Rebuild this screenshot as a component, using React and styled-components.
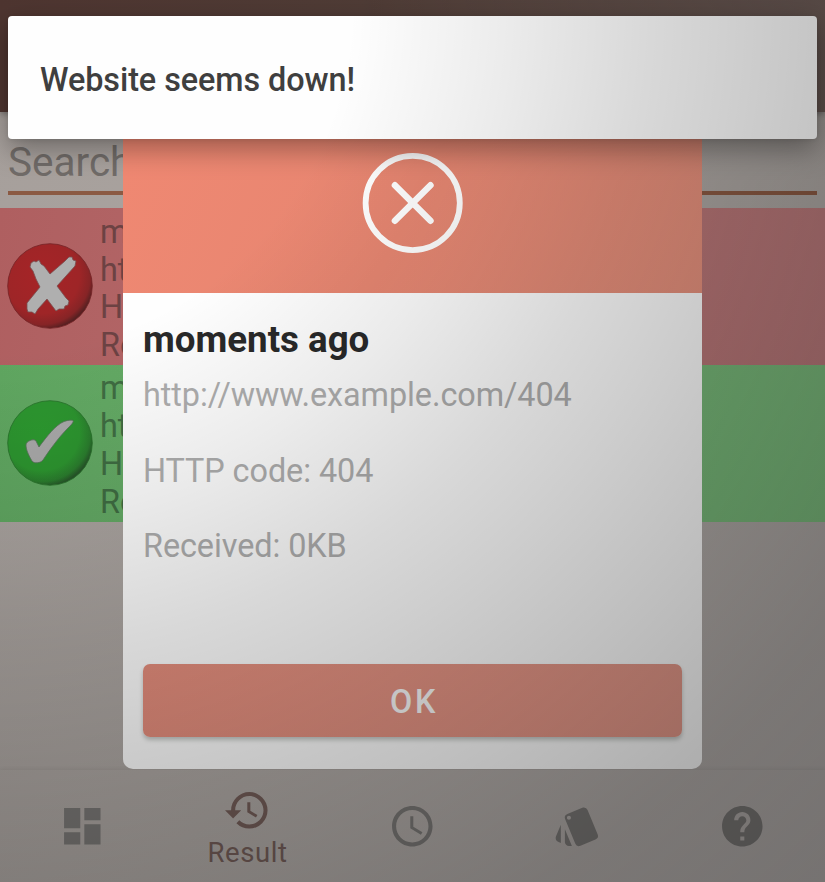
import React from "react";
import styled, { createGlobalStyle } from "styled-components";
import { MdDashboard, MdHistory, MdAccessTime, MdStyle, MdHelp } from "react-icons/md";

const Global = createGlobalStyle`
  *, *::before, *::after { box-sizing: border-box; }
  body { margin: 0; overflow: hidden; font-family: Roboto, "Noto Sans", sans-serif; }
`;

const Screen = styled.div`
  position: relative;
  display: flex;
  flex-direction: column;
  width: 825px;
  height: 882px;
  overflow: hidden;
  background: linear-gradient(135deg, #a59e9a, #aea8a4 60%, #b5b0ae);
`;

const AppBar = styled.header`
  flex: none;
  height: 111.5px;
  background: linear-gradient(90deg, #4e3530, #4f3c36 45%, #6e5d58);
  box-shadow: 0 2px 6px rgba(0, 0, 0, 0.3);
`;

const SearchField = styled.div`
  flex: none;
  height: 83.5px;
  margin: 0 8px 13px;
  padding-top: 27px;
  border-bottom: 4px solid #8b5a43;
  color: #706b68;
  font-size: 40.5px;
  line-height: 46px;
`;

const ResultRow = styled.div`
  flex: none;
  display: flex;
  align-items: center;
  height: 156.8px;
  padding-left: 7px;
  gap: 7px;
  background: ${(p) =>
    p.$ok
      ? "linear-gradient(100deg, #5fa660, #7dbd7e)"
      : "linear-gradient(100deg, #af5f60, #bb7b7c)"};
  color: ${(p) => (p.$ok ? "#3f6c42" : "#6c4243")};

  svg { flex: none; }
`;

const RowText = styled.div`
  padding-top: 6px;
  font-size: 32.4px;
  line-height: 37.9px;
  white-space: nowrap;
`;

const NavBar = styled.nav`
  display: flex;
  height: 112px;
  margin-top: auto;
  box-shadow: 0 -1px 4px rgba(0, 0, 0, 0.07);
`;

const NavItem = styled.div`
  flex: 1;
  display: flex;
  flex-direction: column;
  align-items: center;
  justify-content: ${(p) => (p.$active ? "flex-start" : "center")};
  padding-top: ${(p) => (p.$active ? "16px" : "0")};
  color: ${(p) => (p.$active ? "#735d58" : "#7a7876")};

  svg { flex: none; width: 48.6px; height: 48.6px; }
`;

const NavLabel = styled.span`
  margin-top: 1px;
  font-size: 27.5px;
  line-height: 34px;
  letter-spacing: 0.6px;
`;

const Dialog = styled.section`
  position: absolute;
  left: 123px;
  top: 112px;
  display: flex;
  flex-direction: column;
  width: 579px;
  height: 657px;
  border-radius: 10px;
  overflow: hidden;
  background: #fefefe;
`;

const DialogBanner = styled.div`
  display: flex;
  justify-content: center;
  height: 181px;
  padding-top: 39.5px;
  background: linear-gradient(115deg, #f08872, #e68671 50%, #e8937f);
`;

const DialogBody = styled.div`
  flex: 1;
  display: flex;
  flex-direction: column;
  padding: 24px 20px 32px;
`;

const Title = styled.h2`
  margin: 0 0 14px;
  color: #292929;
  font-size: 36.7px;
  font-weight: 700;
  line-height: 46px;
`;

const Detail = styled.p`
  margin: 0 0 37.8px;
  color: #aeaeae;
  font-size: 32.4px;
  line-height: 37.9px;
  letter-spacing: -0.08px;
`;

const OkButton = styled.button`
  height: 73px;
  margin-top: auto;
  padding: 3px 0 0 3px;
  border: 0;
  border-radius: 7px;
  background: linear-gradient(100deg, #e48d7c, #e69a8b);
  box-shadow: 0 3px 4px rgba(50, 60, 50, 0.28);
  color: #fbfbfb;
  font: 500 32.3px Roboto, sans-serif;
  letter-spacing: 2.6px;
`;

const Toast = styled.div`
  position: absolute;
  left: 8px;
  top: 16px;
  display: flex;
  align-items: center;
  width: 809px;
  height: 123px;
  padding: 4px 32px 0;
  border-radius: 4px;
  background: #fefefe;
  box-shadow: 0 10px 28px rgba(0, 0, 0, 0.34), 0 1px 4px rgba(0, 0, 0, 0.08);
  color: #3f3f3f;
  font-size: 32.4px;
  font-weight: 500;
  letter-spacing: -0.07px;
`;

const Shade = styled.div`
  position: absolute;
  inset: 0;
  pointer-events: none;
  background: radial-gradient(
    circle at 0 0,
    rgba(0, 0, 0, 0) 350px,
    rgba(0, 0, 0, 0.075) 510px,
    rgba(0, 0, 0, 0.15) 650px,
    rgba(0, 0, 0, 0.225) 819px,
    rgba(0, 0, 0, 0.315) 1033px,
    rgba(0, 0, 0, 0.35) 1203px
  );
`;

function StatusBall({ ok }) {
  const id = ok ? "ball-ok" : "ball-fail";
  return (
    <svg width="86" height="86" viewBox="0 0 86 86">
      <defs>
        <radialGradient id={id} cx="0.4" cy="0.38" r="0.64">
          <stop offset="0" stopColor={ok ? "#2c992f" : "#a62427"} />
          <stop offset="0.7" stopColor={ok ? "#2c942f" : "#9e2527"} />
          <stop offset="0.9" stopColor={ok ? "#2a7c2d" : "#862426"} />
          <stop offset="1" stopColor={ok ? "#265528" : "#562021"} />
        </radialGradient>
      </defs>
      <circle cx="43" cy="43" r="42.3" fill={`url(#${id})`} stroke={ok ? "#277029" : "#742326"} strokeWidth="0.8" />
      {ok ? (
        <path
          d="M19 45 C19 41 27 38 29 41 L32 47 C40 36 49 25 56 22 C60 20 65 20 66 20.5 C67 22 64 25 61 28 C51 38 42 51 36 60 C34 63 27 64 25 61 C22 56 19 50 19 45 Z"
          fill="#a8a8a8" stroke="#58705a" strokeWidth="0.8"
        />
      ) : (
        <path
          d="M24 20 L27 18 L29 19 L32 17 L34 21 L37 23 L43 31 L58 18 L62 14 L65 14 L66 17 L69 18 L68 23 L50 43 L59 55 L62 58 L61 62 L58 63 L57 66 L52 66 L49 68 L46 64 L40 56 L31 66 L28 71 L25 69 L21 69 L20 66 L20 60 L33 44 L29 36 L26 28 L23 24 Z"
          fill="#afafaf" stroke="#795152" strokeWidth="0.8" strokeLinejoin="round"
        />
      )}
    </svg>
  );
}

const results = [
  { ok: false, lines: ["moments ago", "http://www.example.com/404", "HTTP code: 404", "Received: 0KB"] },
  { ok: true, lines: ["moments ago", "http://www.example.com", "HTTP code: 200", "Received: 1KB"] },
];

const tabs = [
  { Icon: MdDashboard },
  { Icon: MdHistory, label: "Result" },
  { Icon: MdAccessTime },
  { Icon: MdStyle },
  { Icon: MdHelp },
];

export default function App() {
  return (
    <Screen>
      <Global />
      <AppBar />
      <SearchField>Search</SearchField>
      {results.map((r) => (
        <ResultRow key={String(r.ok)} $ok={r.ok}>
          <StatusBall ok={r.ok} />
          <RowText>
            {r.lines.map((line) => (
              <div key={line}>{line}</div>
            ))}
          </RowText>
        </ResultRow>
      ))}
      <NavBar>
        {tabs.map(({ Icon, label }, i) => (
          <NavItem key={i} $active={Boolean(label)}>
            <Icon />
            {label && <NavLabel>{label}</NavLabel>}
          </NavItem>
        ))}
      </NavBar>
      <Dialog>
        <DialogBanner>
          <svg width="102" height="102" viewBox="0 0 102 102" fill="none" stroke="#ffffff">
            <circle cx="50.7" cy="51" r="47.1" strokeWidth="5.8" />
            <path d="M32.9 33.2L68.5 68.8M68.5 33.2L32.9 68.8" strokeWidth="6.4" strokeLinecap="round" />
          </svg>
        </DialogBanner>
        <DialogBody>
          <Title>moments ago</Title>
          <Detail>http://www.example.com/404</Detail>
          <Detail>HTTP code: 404</Detail>
          <Detail>Received: 0KB</Detail>
          <OkButton>OK</OkButton>
        </DialogBody>
      </Dialog>
      <Toast>Website seems down!</Toast>
      <Shade />
    </Screen>
  );
}
